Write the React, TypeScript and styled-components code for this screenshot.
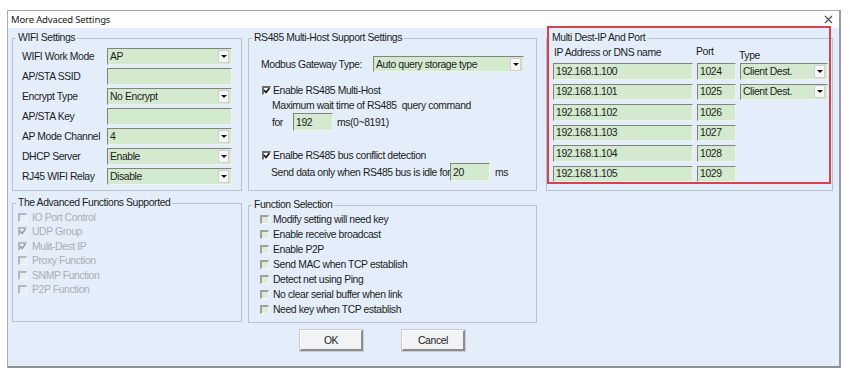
import React from 'react'
import styled, { createGlobalStyle } from 'styled-components'

const GlobalStyle = createGlobalStyle`
    body {
        margin: 0;
        background: #ffffff;
        font-family: "Liberation Sans", Arial, sans-serif;
        font-size: 10.4px;
        letter-spacing: -0.4px;
        color: #1c1c1c;
    }
`

const Window = styled.div`
    margin: 10px 0 0 7px;
    width: 831px;
    border: 1px solid #a9adb2;
    border-right: 2px solid #979ba0;
    border-bottom: 2px solid #8d9196;
    background: #e4eefa;
`

const TitleBar = styled.div`
    height: 17px;
    background: #fdfdfd;
    display: flex;
    align-items: center;
    padding: 0 6px 0 3px;
    font-family: "Noto Sans", "Liberation Sans", sans-serif;
    font-size: 9.5px;
    letter-spacing: -0.15px;
    color: #1a1a1a;
`

const Close = styled.span`
    margin-left: auto;
    display: flex;
`

const Body = styled.div`
    height: 334px;
    display: flex;
    padding: 4px 0 0 4px;
`

const Column = styled.div<{ $w: number, $gap: number, $ml?: number }>`
    width: ${p => p.$w}px;
    margin-left: ${p => p.$ml || 0}px;
    display: flex;
    flex-direction: column;
    gap: ${p => p.$gap}px;
    position: relative;
`

const Group = styled.fieldset<{ $h: number }>`
    margin: 0;
    padding: 0;
    min-width: 0;
    box-sizing: border-box;
    height: ${p => p.$h}px;
    border: 1px solid #bac3cd;
`

const Legend = styled.legend`
    margin-left: 3px;
    padding: 0 2px;
    line-height: 12px;
    color: #1c1c1c;
`

const Content = styled.div<{ $pl: number, $pt?: number }>`
    padding: ${p => p.$pt || 0}px 0 0 ${p => p.$pl}px;
`

const FormGrid = styled.div`
    display: grid;
    grid-template-columns: 85px 125px;
    grid-auto-rows: 17px;
    row-gap: 3px;
    align-items: center;
`

const Field = styled.div<{ $w?: number, $h?: number }>`
    box-sizing: border-box;
    width: ${p => (p.$w ? p.$w + 'px' : 'auto')};
    height: ${p => p.$h || 17}px;
    background: #d3eacf;
    border-top: 1px solid #7f8480;
    border-left: 1px solid #7f8480;
    border-right: 1px solid #eef4ec;
    border-bottom: 1px solid #eef4ec;
    padding: 0 2px;
    display: flex;
    align-items: center;
    white-space: nowrap;
    color: #1c1c1c;
`

const Arrow = styled.span`
    margin-left: auto;
    width: 9px;
    height: 11px;
    flex: none;
    background: #f6f6f6;
    border: 1px solid #cfcfcf;
    display: flex;
    align-items: center;
    justify-content: center;
    &::after {
        content: '';
        border-left: 3px solid transparent;
        border-right: 3px solid transparent;
        border-top: 3px solid #111;
    }
`

const Select = ({ value, w, h }: { value: string, w?: number, h?: number }) => (
    <Field $w={w} $h={h}>
        {value}
        <Arrow />
    </Field>
)

const CheckList = styled.div<{ $row: number }>`
    display: grid;
    grid-auto-rows: ${p => p.$row}px;
`

const CheckRow = styled.div<{ $gap: number, $disabled?: boolean, $mt?: number, $ml?: number }>`
    display: flex;
    align-items: center;
    gap: ${p => p.$gap}px;
    height: 14px;
    margin-top: ${p => p.$mt || 0}px;
    margin-left: ${p => p.$ml || 0}px;
    color: ${p => (p.$disabled ? '#a9adb1' : '#1c1c1c')};
    white-space: nowrap;
`

type Tone = 'disabled' | 'normal' | 'soft'

const edge = (t: Tone) => (t === 'disabled' ? '#b4b8bc' : t === 'soft' ? '#9da39a' : '#6d6d6d')

const Box = styled.span<{ $tone: Tone }>`
    box-sizing: border-box;
    width: 9px;
    height: 9px;
    flex: none;
    display: flex;
    border-top: 2px solid ${p => edge(p.$tone)};
    border-left: 2px solid ${p => edge(p.$tone)};
    border-right: 1px solid #f4f7f2;
    border-bottom: 1px solid #f4f7f2;
    background: ${p => (p.$tone === 'soft' ? '#e1e9da' : p.$tone === 'normal' ? '#f7f7f7' : 'transparent')};
`

const Check = ({ tone, checked }: { tone: Tone, checked?: boolean }) => (
    <Box $tone={tone}>
        {checked && (
            <svg width="7" height="7" viewBox="0 0 7 7" style={{ margin: '-1px 0 0 -1px' }}>
                <polyline points="1,3 3,5.5 6.5,1" fill="none" stroke={tone === 'disabled' ? '#9a9ea2' : '#111'} strokeWidth="1.6" />
            </svg>
        )}
    </Box>
)

const Line = styled.div<{ $mt?: number, $h?: number, $pl?: number }>`
    display: flex;
    align-items: center;
    height: ${p => p.$h || 14}px;
    margin-top: ${p => p.$mt || 0}px;
    padding-left: ${p => p.$pl || 0}px;
    white-space: pre;
`

const Label = styled.span<{ $w: number }>`
    width: ${p => p.$w}px;
    flex: none;
`

const Unit = styled.span<{ $ml: number }>`
    margin-left: ${p => p.$ml}px;
`

const ButtonRow = styled.div`
    display: flex;
    gap: 39px;
    padding-left: 52px;
    margin-top: -1px;
`

const Button = styled.div`
    box-sizing: border-box;
    width: 63px;
    height: 21px;
    display: flex;
    align-items: center;
    justify-content: center;
    background: #f1f3f4;
    border-top: 1px solid #ffffff;
    border-left: 1px solid #ffffff;
    border-right: 2px solid #8b8e91;
    border-bottom: 2px solid #8b8e91;
    box-shadow: 0 0 0 1px #c9ccd0;
`

const DestGrid = styled.div`
    display: grid;
    grid-template-columns: 140px 39px 88px;
    grid-template-rows: 15px;
    grid-auto-rows: 16.5px;
    column-gap: 4px;
    row-gap: 4px;
`

const Head = styled.div<{ $pt: number, $ml: number }>`
    padding-top: ${p => p.$pt}px;
    margin-left: ${p => p.$ml}px;
    line-height: 12px;
    white-space: nowrap;
`

const Highlight = styled.div`
    position: absolute;
    top: -6px;
    left: 1px;
    width: 284px;
    height: 158px;
    box-sizing: border-box;
    border: 2px solid #d6434f;
    pointer-events: none;
`

const wifiRows: [string, string, boolean][] = [
    ['WIFI Work Mode', 'AP', true],
    ['AP/STA SSID', '', false],
    ['Encrypt Type', 'No Encrypt', true],
    ['AP/STA Key', '', false],
    ['AP Mode Channel', '4', true],
    ['DHCP Server', 'Enable', true],
    ['RJ45 WIFI Relay', 'Disable', true],
]

const advanced: [string, boolean][] = [
    ['IO Port Control', false],
    ['UDP Group', true],
    ['Mulit-Dest IP', true],
    ['Proxy Function', false],
    ['SNMP Function', false],
    ['P2P Function', false],
]

const functions = [
    'Modify setting will need key',
    'Enable receive broadcast',
    'Enable P2P',
    'Send MAC when TCP establish',
    'Detect net using Ping',
    'No clear serial buffer when link',
    'Need key when TCP establish',
]

const dests = [
    ['192.168.1.100', '1024', 'Client Dest.'],
    ['192.168.1.101', '1025', 'Client Dest.'],
    ['192.168.1.102', '1026', ''],
    ['192.168.1.103', '1027', ''],
    ['192.168.1.104', '1028', ''],
    ['192.168.1.105', '1029', ''],
]

export default function App() {
    return (
        <>
            <GlobalStyle />
            <Window>
                <TitleBar>
                    More Advaced Settings
                    <Close>
                        <svg width="9" height="9" viewBox="0 0 9 9">
                            <path d="M1 1L8 8M8 1L1 8" stroke="#4a4a4a" strokeWidth="1.1" />
                        </svg>
                    </Close>
                </TitleBar>
                <Body>
                    <Column $w={230} $gap={6}>
                        <Group $h={159}>
                            <Legend>WIFI Settings</Legend>
                            <Content $pl={9} $pt={4}>
                                <FormGrid>
                                    {wifiRows.map(([label, value, combo]) => (
                                        <React.Fragment key={label}>
                                            <span>{label}</span>
                                            {combo ? <Select value={value} /> : <Field />}
                                        </React.Fragment>
                                    ))}
                                </FormGrid>
                            </Content>
                        </Group>
                        <Group $h={125}>
                            <Legend>The Advanced Functions Supported</Legend>
                            <Content $pl={5} $pt={1}>
                                <CheckList $row={14.5}>
                                    {advanced.map(([label, checked]) => (
                                        <CheckRow key={label} $gap={5} $disabled>
                                            <Check tone="disabled" checked={checked} />
                                            {label}
                                        </CheckRow>
                                    ))}
                                </CheckList>
                            </Content>
                        </Group>
                    </Column>
                    <Column $w={289} $gap={8} $ml={6}>
                        <Group $h={159}>
                            <Legend>RS485 Multi-Host Support Settings</Legend>
                            <Content $pl={12}>
                                <Line $mt={12} $h={16}>
                                    <Label $w={112}>Modbus Gateway Type:</Label>
                                    <Select value="Auto query storage type" w={151} h={16} />
                                </Line>
                                <CheckRow $gap={2} $mt={11} $ml={1}>
                                    <Check tone="normal" checked />
                                    Enable RS485 Multi-Host
                                </CheckRow>
                                <Line $mt={1} $pl={11}>Maximum wait time of RS485  query command</Line>
                                <Line $mt={1} $h={18} $pl={11}>
                                    <Label $w={21}>for</Label>
                                    <Field $w={40} $h={18}>192</Field>
                                    <Unit $ml={4}>ms(0~8191)</Unit>
                                </Line>
                                <CheckRow $gap={2} $mt={17} $ml={1}>
                                    <Check tone="normal" checked />
                                    Enalbe RS485 bus conflict detection
                                </CheckRow>
                                <Line $mt={1} $h={18} $pl={10}>
                                    <Label $w={179}>Send data only when RS485 bus is idle for</Label>
                                    <Field $w={40} $h={18}>20</Field>
                                    <Unit $ml={5}>ms</Unit>
                                </Line>
                            </Content>
                        </Group>
                        <Group $h={124}>
                            <Legend>Function Selection</Legend>
                            <Content $pl={11} $pt={1}>
                                <CheckList $row={15}>
                                    {functions.map(label => (
                                        <CheckRow key={label} $gap={4}>
                                            <Check tone="soft" />
                                            {label}
                                        </CheckRow>
                                    ))}
                                </CheckList>
                            </Content>
                        </Group>
                        <ButtonRow>
                            <Button>OK</Button>
                            <Button>Cancel</Button>
                        </ButtonRow>
                    </Column>
                    <Column $w={287} $gap={0} $ml={9}>
                        <Group $h={159}>
                            <Legend>Multi Dest-IP And Port</Legend>
                            <Content $pl={6}>
                                <DestGrid>
                                    <Head $pt={3} $ml={1}>IP Address or DNS name</Head>
                                    <Head $pt={2} $ml={-1}>Port</Head>
                                    <Head $pt={6} $ml={-1}>Type</Head>
                                    {dests.map(([ip, port, type]) => (
                                        <React.Fragment key={ip}>
                                            <Field $h={16.5}>{ip}</Field>
                                            <Field $h={16.5}>{port}</Field>
                                            {type ? <Select value={type} h={16.5} /> : <span />}
                                        </React.Fragment>
                                    ))}
                                </DestGrid>
                            </Content>
                        </Group>
                        <Highlight />
                    </Column>
                </Body>
            </Window>
        </>
    )
}
